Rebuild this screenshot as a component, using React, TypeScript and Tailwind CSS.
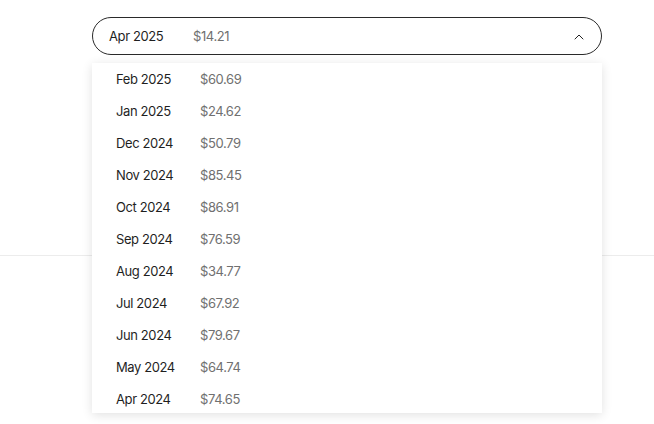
import { ChevronUp } from 'lucide-react'

const months = [
  { label: 'Feb 2025', amount: '$60.69' },
  { label: 'Jan 2025', amount: '$24.62' },
  { label: 'Dec 2024', amount: '$50.79' },
  { label: 'Nov 2024', amount: '$85.45' },
  { label: 'Oct 2024', amount: '$86.91' },
  { label: 'Sep 2024', amount: '$76.59' },
  { label: 'Aug 2024', amount: '$34.77' },
  { label: 'Jul 2024', amount: '$67.92' },
  { label: 'Jun 2024', amount: '$79.67' },
  { label: 'May 2024', amount: '$64.74' },
  { label: 'Apr 2024', amount: '$74.65' }
]

export default function App() {
  return (
    <div
      className="h-[424px] w-[654px] overflow-hidden bg-white text-[13px] text-[#1f1f1f]"
      style={{ fontFamily: 'Inter, "Noto Sans", sans-serif' }}
    >
      <div className="relative pt-[17px]">
        <div className="ml-[92px] w-[510px]">
          <button className="flex h-[38px] w-full items-center rounded-full border border-[#2a2a2a] pl-[16px] pr-[14px] pt-[1px]">
            <span className="w-[84px] text-left tracking-[-0.4px]">Apr 2025</span>
            <span className="text-[#707070] tracking-[-0.4px]">$14.21</span>
            <ChevronUp className="ml-auto size-[16px] text-[#222]" strokeWidth={1.5} />
          </button>
        </div>

        <div className="h-[201px] border-b border-[#ececec]" />

        <div className="absolute left-[92px] top-[63px] w-[510px] max-h-[350px] overflow-hidden bg-white pt-[1px] shadow-[0_2px_10px_rgba(0,0,0,0.12)]">
          {months.map((m) => (
            <div key={m.label} className="flex h-[32px] items-center pl-[24px]">
              <span className="w-[84px] tracking-[-0.4px]">{m.label}</span>
              <span className="text-[#707070] tracking-[-0.4px]">{m.amount}</span>
            </div>
          ))}
        </div>
      </div>
    </div>
  )
}
